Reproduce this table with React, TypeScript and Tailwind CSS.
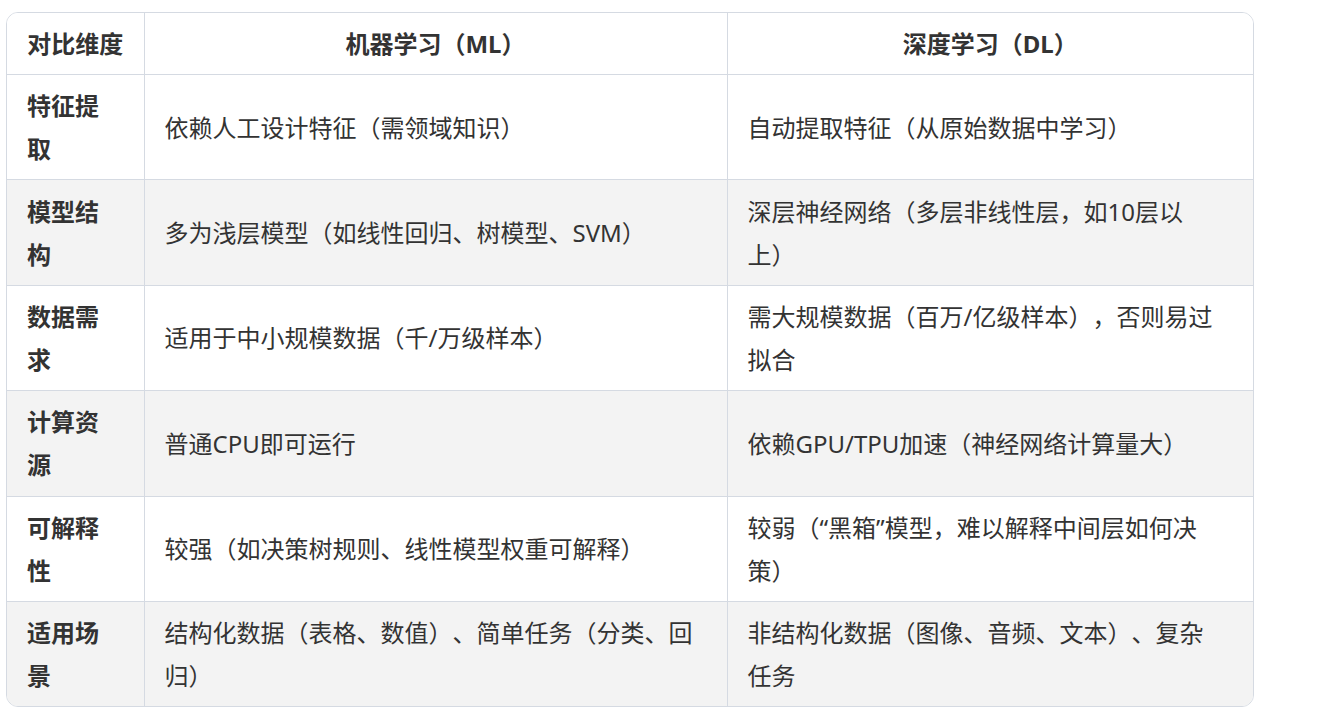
import React from "react";

type Row = { k: React.ReactNode; ml: React.ReactNode; dl: React.ReactNode };

const rows: Row[] = [
  { k: "特征提取", ml: "依赖人工设计特征（需领域知识）", dl: "自动提取特征（从原始数据中学习）" },
  {
    k: "模型结构",
    ml: "多为浅层模型（如线性回归、树模型、SVM）",
    dl: (
      <>
        深层神经网络（多层非线性层，如10层以
        <br />
        上）
      </>
    ),
  },
  {
    k: "数据需求",
    ml: "适用于中小规模数据（千/万级样本）",
    dl: (
      <>
        需大规模数据（百万/亿级样本），否则易过
        <br />
        拟合
      </>
    ),
  },
  { k: "计算资源", ml: "普通CPU即可运行", dl: "依赖GPU/TPU加速（神经网络计算量大）" },
  {
    k: "可解释性",
    ml: "较强（如决策树规则、线性模型权重可解释）",
    dl: (
      <>
        较弱（“黑箱”模型，难以解释中间层如何决
        <br />
        策）
      </>
    ),
  },
  {
    k: "适用场景",
    ml: (
      <>
        结构化数据（表格、数值）、简单任务（分类、回
        <br />
        归）
      </>
    ),
    dl: (
      <>
        非结构化数据（图像、音频、文本）、复杂
        <br />
        任务
      </>
    ),
  },
];

export default function App() {
  return (
    <div
      className="min-h-[714px] w-[1340px] bg-white pt-[12px] pl-[6px] text-[#333333] [text-spacing-trim:space-all]"
      style={{ fontFamily: '"Noto Sans", "Noto Sans CJK SC", sans-serif' }}
      lang="zh-CN"
    >
      <div className="w-[1248px] overflow-hidden rounded-[12px] border border-[#d5dae2]">
        <table className="w-full table-fixed border-collapse text-[24px] leading-[43px]">
          <colgroup>
            <col className="w-[137px]" />
            <col className="w-[583px]" />
            <col />
          </colgroup>
          <thead>
            <tr className="bg-white">
              <th className="whitespace-nowrap border-r border-b border-[#d5dae2] py-[9px] text-center font-bold">
                对比维度
              </th>
              <th className="border-r border-b border-[#d5dae2] px-5 py-[9px] text-center font-bold">
                机器学习（ML）
              </th>
              <th className="border-b border-[#d5dae2] px-5 py-[9px] text-center font-bold">
                深度学习（DL）
              </th>
            </tr>
          </thead>
          <tbody>
            {rows.map((r, i) => {
              const last = i === rows.length - 1;
              return (
                <tr key={i} className={i % 2 === 1 ? "bg-[#f3f3f3]" : "bg-white"}>
                  <td
                    className={`border-r border-[#d5dae2] pl-5 pr-[26px] py-[9.2px] align-middle font-bold ${
                      last ? "" : "border-b"
                    }`}
                  >
                    {r.k}
                  </td>
                  <td
                    className={`border-r border-[#d5dae2] px-5 py-[9.2px] align-middle ${
                      last ? "" : "border-b"
                    }`}
                  >
                    {r.ml}
                  </td>
                  <td
                    className={`border-[#d5dae2] px-5 py-[9.2px] align-middle ${last ? "" : "border-b"}`}
                  >
                    {r.dl}
                  </td>
                </tr>
              );
            })}
          </tbody>
        </table>
      </div>
    </div>
  );
}
